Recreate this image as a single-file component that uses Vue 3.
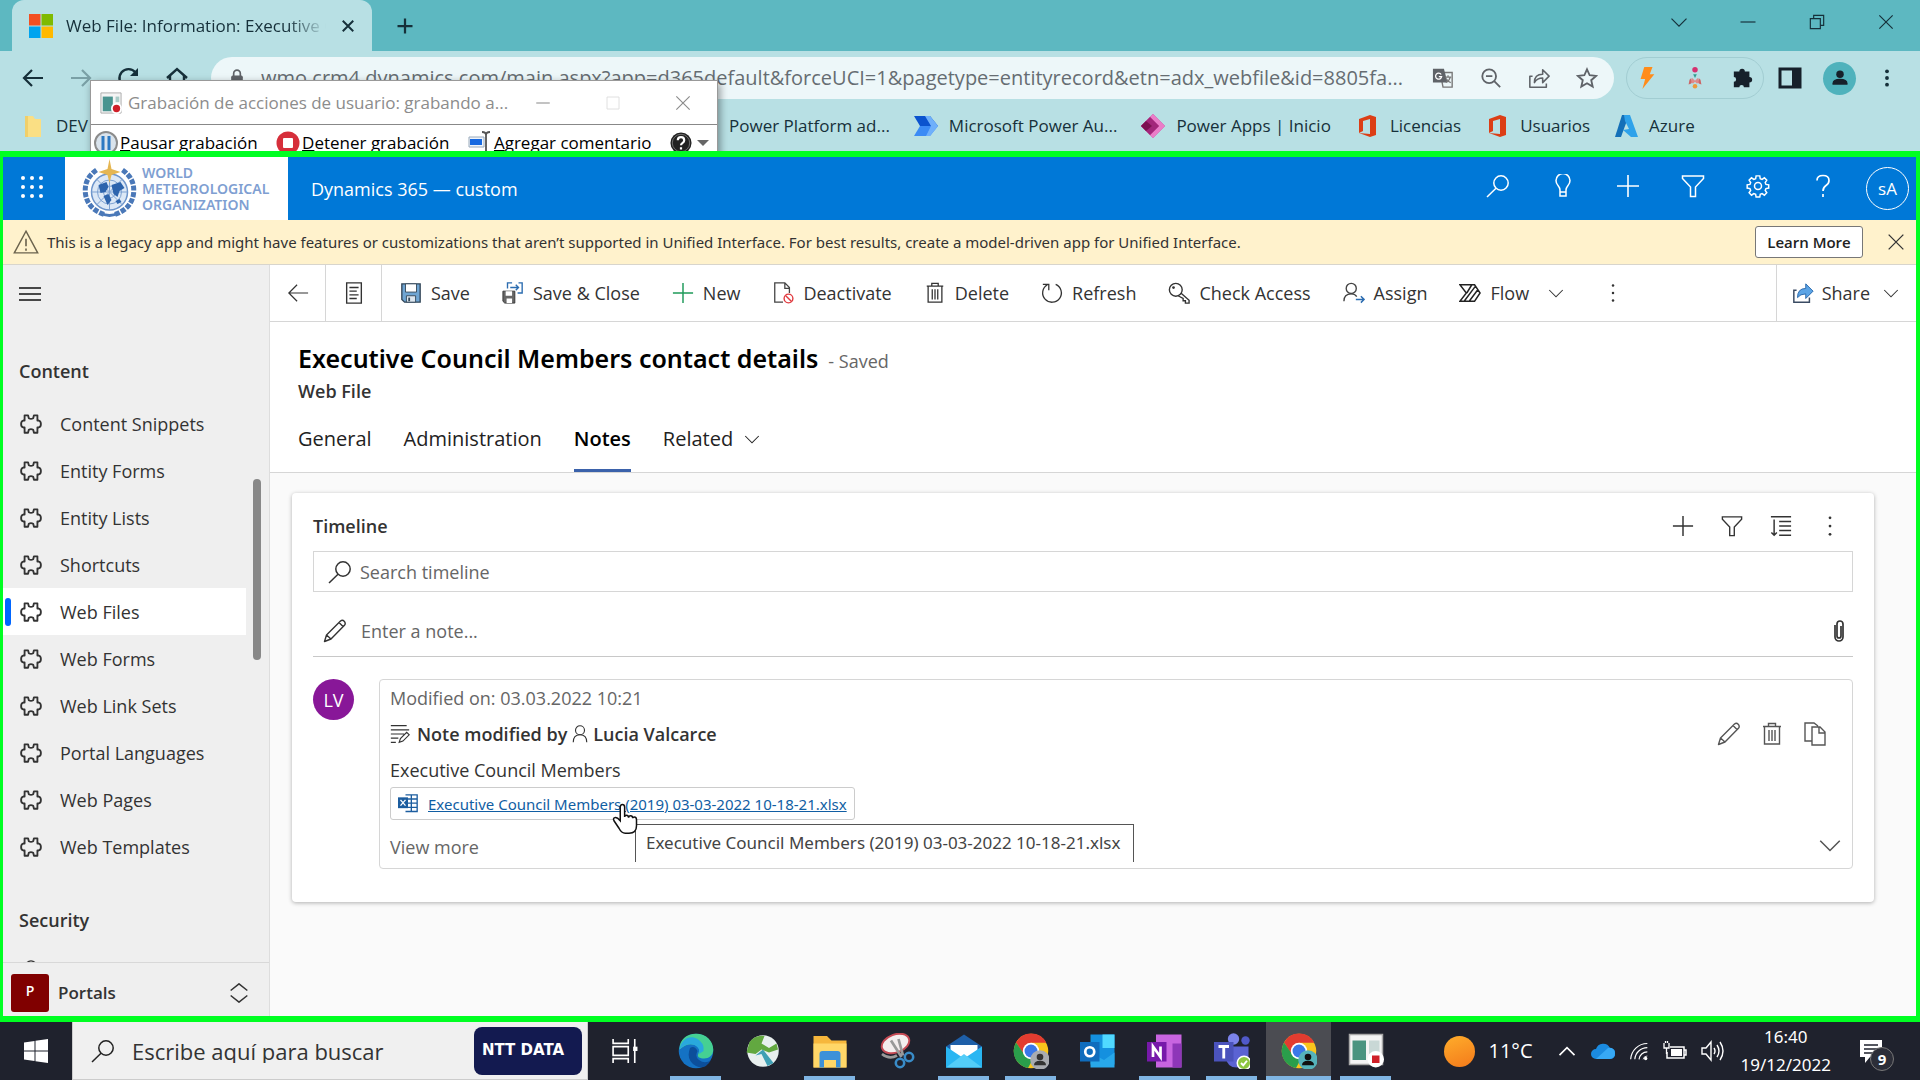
<script setup>
import { ref } from 'vue'

const I = {
  back: '<path d="M22 12H3M11 4l-8 8 8 8" fill="none" stroke="currentColor" stroke-width="2.2"/>',
  forward: '<path d="M2 12h19M13 4l8 8-8 8" fill="none" stroke="currentColor" stroke-width="2.2"/>',
  reload: '<path d="M20 15A9 9 0 1 1 18.500 6.500" fill="none" stroke="currentColor" stroke-width="2.400"/><path d="M21 2v8h-8z" fill="currentColor"/>',
  home: '<path d="M2 12L12 3l10 9M5 10v11h14V10" fill="none" stroke="currentColor" stroke-width="2.400"/>',
  lock: '<rect x="5" y="9" width="14" height="12" rx="2" fill="currentColor"/><path d="M8 10V6.500a4 4 0 0 1 8 0V10" fill="none" stroke="currentColor" stroke-width="2"/>',
  close: '<path d="M5 5l14 14M19 5L5 19" fill="none" stroke="currentColor" stroke-width="2.600"/>',
  thinClose: '<path d="M4 4l16 16M20 4L4 20" fill="none" stroke="currentColor" stroke-width="1.400"/>',
  boldPlus: '<path d="M12 2v20M2 12h20" fill="none" stroke="currentColor" stroke-width="3"/>',
  plus: '<path d="M12 1v22M1 12h22" fill="none" stroke="currentColor" stroke-width="1.600"/>',
  chevron: '<path d="M3 8l9 9 9-9" fill="none" stroke="currentColor" stroke-width="1.400"/>',
  caretUp: '<path d="M3 17l9-9 9 9" fill="none" stroke="currentColor" stroke-width="2"/>',
  minimize: '<path d="M3 12h18" fill="none" stroke="currentColor" stroke-width="1.400"/>',
  restore: '<path d="M4 8h12v12H4zM8 8V4h12v12h-4" fill="none" stroke="currentColor" stroke-width="1.400"/>',
  square: '<path d="M4 4h16v16H4z" fill="none" stroke="currentColor" stroke-width="1.200"/>',
  translate: '<path d="M9 6h13v16H12z" fill="none" stroke="#777" stroke-width="1.500"/><path d="M1 2h12l4 15H1z" fill="#5f6368"/><path d="M10 8.200a3.300 3.300 0 1 0 .5 2.300H7.500" fill="none" stroke="#fff" stroke-width="1.400"/><path d="M14 11h7M17.500 9v2M20 11q-1 4-5 6M15.500 13q2 3 5 4" fill="none" stroke="#777" stroke-width="1.300"/>',
  zoomOut: '<circle cx="10" cy="10" r="7.500" fill="none" stroke="currentColor" stroke-width="2"/><path d="M15.500 15.500L22 22M6.500 10h7" fill="none" stroke="currentColor" stroke-width="2"/>',
  shareUrl: '<path d="M5 10H2v12h18v-4M7 17q0-9 9-9V3l7 7-7 7v-5q-6 0-9 5z" fill="none" stroke="currentColor" stroke-width="1.700" stroke-linejoin="round"/>',
  star: '<path d="M12 2.500l2.900 6.500 7 .7-5.300 4.700 1.600 7L12 17.700l-6.200 3.700 1.600-7L2.100 9.700l7-.7z" fill="none" stroke="currentColor" stroke-width="2"/>',
  bolt: '<path d="M9 0h9l-3 8h5L7 24l3-11H5z" fill="#ff8c1a"/>',
  rocket: '<circle cx="12" cy="3" r="3" fill="#d6316f"/><path d="M10 8h4l-2 4z" fill="#2f9e8f"/><path d="M9 12l3 3 3-3 2 5-3 1-2-2-2 2-3-1z" fill="#e08a8a"/><path d="M6 14l2-2v6l-3 1zM18 14l-2-2v6l3 1z" fill="#c66"/><circle cx="12" cy="21" r="2.500" fill="#ec9a3c"/>',
  puzzle: '<path d="M8 5a3 3 0 0 1 6 0h5v6a3 3 0 0 1 0 6v5h-6a2.500 2.500 0 0 0-5 0H2v-6a2.500 2.500 0 0 0 0-5V5z" fill="#16202a"/>',
  panel: '<rect x="2" y="3" width="20" height="18" fill="none" stroke="#16202a" stroke-width="3"/><rect x="14" y="3" width="8" height="18" fill="#16202a"/>',
  person: '<circle cx="12" cy="7" r="5" fill="#16202a"/><path d="M2 21v-2q0-6 10-6t10 6v2z" fill="#16202a"/>',
  dots: '<g fill="currentColor"><circle cx="12" cy="4" r="2.300"/><circle cx="12" cy="12" r="2.300"/><circle cx="12" cy="20" r="2.300"/></g>',
  more: '<g fill="currentColor"><circle cx="12" cy="3" r="1.500"/><circle cx="12" cy="12" r="1.500"/><circle cx="12" cy="21" r="1.500"/></g>',
  ms: '<path d="M0 0h11.500v11.500H0z" fill="#f25022"/><path d="M12.500 0H24v11.500H12.500z" fill="#7fba00"/><path d="M0 12.500h11.500V24H0z" fill="#00a4ef"/><path d="M12.500 12.500H24V24H12.500z" fill="#ffb900"/>',
  folder: '<path d="M4 2h8l2 3h6v18H4z" fill="#fadf84"/><path d="M4 2h3v21H4z" fill="#f0cf6a"/>',
  automate: '<path d="M0 2h16l8 10H6z" fill="#0b53ce"/><path d="M6 12h18l-8 10H0z" fill="#3b8bf5"/><path d="M11 2h5l8 10-8 10h-4l5-10z" fill="#6fb0fb"/>',
  apps: '<path d="M12 0l12 12-12 12L0 12z" fill="#c4398f"/><path d="M12 0l12 12-12 12-3-3 9-9-9-9z" fill="#ea7dc8"/><path d="M9 3l9 9-9 9-9-9z" fill="#a3267a"/><path d="M5 7l6 5-6 5-5-5z" fill="#7c1252"/>',
  office: '<path d="M4 5L15 1l6 2v18l-6 2-11-4 11 1V5L8 7v10l-4 2z" fill="#dc3e15"/>',
  azure: '<path d="M8 1h7L7 23H1z" fill="#1470b8"/><path d="M10 1h6l8 22h-7L9 16l6-1-4-8z" fill="#2fa2ea"/>',
  recorder: '<path d="M1 1h22v22H1z" fill="#f4f4f4" stroke="#a8a8a8"/><path d="M3 5h11v16H3z" fill="#4a9490"/><path d="M17 5h4v6h-4z" fill="#a9cbc7"/><circle cx="18" cy="18" r="6" fill="#fff"/><circle cx="18" cy="18" r="4" fill="#cf1f28"/>',
  recorderTask: '<path d="M1 1h22v20H1z" fill="#f4f4f4" stroke="#a8a8a8"/><path d="M3 5h9v13H3z" fill="#4a9480"/><path d="M14 5h7v9h-7z" fill="#c9d8d6"/><circle cx="18.500" cy="17.500" r="5.500" fill="#fff"/><rect x="16" y="15" width="5" height="5" fill="#cf1f28"/>',
  pause: '<circle cx="12" cy="12" r="11" fill="#d9e3ec" stroke="#8c8c8c" stroke-width="2"/><path d="M7.500 5h3v14h-3zM13.500 5h3v14h-3z" fill="#2c79c2"/>',
  stop: '<circle cx="12" cy="12" r="11.500" fill="#d62f3b"/><rect x="7" y="7" width="10" height="10" rx="1" fill="#fff"/>',
  comment: '<path d="M1 6h15v10H1z" fill="#eef3fa" stroke="#9ab"/><path d="M2 8h12v6H2z" fill="#1769e0"/><path d="M14 1q4 0 4 3v15q0 3-4 3M22 1q-4 0-4 3M22 22q-4 0-4-3" fill="none" stroke="#555" stroke-width="1.800"/>',
  help: '<circle cx="12" cy="12" r="11.500" fill="#222"/><circle cx="12" cy="12" r="9.500" fill="none" stroke="#777"/><path d="M8.500 9q0-3.500 3.500-3.500T15.500 9q0 1.700-1.700 2.800T12 14.500M12 16.500v2.500" fill="none" stroke="#fff" stroke-width="2.400"/>',
  search: '<circle cx="15" cy="9" r="7.200" fill="none" stroke="currentColor" stroke-width="1.500"/><path d="M10 14.200L1 23" fill="none" stroke="currentColor" stroke-width="1.500"/>',
  bulb: '<path d="M9 18v-2q0-2-2-4.500a7 7 0 1 1 10 0Q15 14 15 16v2zM9 18v4h6v-4" fill="none" stroke="currentColor" stroke-width="1.500"/>',
  filter: '<path d="M1.500 2h21v2.500L14.500 13v9.500h-5V13l-8-8.500z" fill="none" stroke="currentColor" stroke-width="1.500"/>',
  gear: '<circle cx="12" cy="12" r="3.500" fill="none" stroke="currentColor" stroke-width="1.500"/><path d="M10 1.500h4l.5 3 2 .9 2.500-1.800 2.600 2.600-1.700 2.600.8 2 3 .5v3.400l-3 .6-.8 2 1.700 2.500-2.600 2.700-2.500-1.800-2 .8-.5 3h-4l-.5-3-2-.8L5 22.500l-2.600-2.700 1.700-2.500-.8-2-3-.6v-3.400l3-.5.8-2L2.400 6.200 5 3.600l2.500 1.800 2-.9z" fill="none" stroke="currentColor" stroke-width="1.600" transform="translate(.9 .5) scale(.92)"/>',
  question: '<path d="M6 6.500q0-5 6-5t6 5q0 3-3 5t-3 5.500M12 20v3" fill="none" stroke="currentColor" stroke-width="1.700"/>',
  warning: '<path d="M12 2l10.800 20H1.200z" fill="none" stroke="#6b634e" stroke-width="1.300"/><path d="M12 9v7M12 18v2" stroke="#6b634e" stroke-width="1.500"/>',
  burger: '<path d="M1 6h22M1 12h22M1 18h22" stroke="currentColor" stroke-width="1.500"/>',
  piece: '<path d="M5 2.500h3.800l.8 3.200q2.400 1.400 4.800 0l.8-3.200H19v5.700h1.500q2.300.6 2.300 3.800t-2.300 3.800H19v5.700h-3.800l-.8-3.200q-2.400-1.400-4.800 0l-.8 3.200H5v-5.700H3.500q-2.300-.6-2.300-3.800t2.300-3.800H5z" fill="none" stroke="currentColor" stroke-width="2" stroke-linejoin="round"/>',
  arrow: '<path d="M23 12H2M11 3l-9 9 9 9" fill="none" stroke="currentColor" stroke-width="1.300"/>',
  form: '<path d="M4 1h16v22H4zM7 6h10M7 10h8M7 14h10M7 18h8" fill="none" stroke="currentColor" stroke-width="1.500"/>',
  save: '<path d="M2 2h20v20H5l-3-3z" fill="#6fa5d3" stroke="#35485a" stroke-width="1.500"/><path d="M6 2h12v9H6z" fill="#fff" stroke="#35485a"/><path d="M7 15h10v7H7z" fill="#dce6ef" stroke="#35485a"/><path d="M9 17h2v4H9z" fill="#35485a"/>',
  saveClose: '<path d="M1 10h13v13H3l-2-2z" fill="#666" stroke="#333"/><path d="M4 10h7v5H4zM5 18h6v5H5z" fill="#fff"/><path d="M6 7V1h5M18 1h4v11h-5M9 6h9M15 3l3 3-3 3" fill="none" stroke="#2b6cb0" stroke-width="1.500"/>',
  deactivate: '<path d="M12 22H3V1h11l5 5v6M14 1v6h5" fill="none" stroke="#444" stroke-width="1.400"/><circle cx="18" cy="18" r="4.800" fill="#fff" stroke="#e0393e" stroke-width="1.500"/><path d="M14.700 14.700l6.600 6.600" stroke="#e0393e" stroke-width="1.500"/>',
  trash: '<path d="M3 4.500h18M8.500 4V1.500h7V4M4.500 4.500V22h15V4.500M9 8v11M12 8v11M15 8v11" fill="none" stroke="currentColor" stroke-width="1.400"/>',
  refresh: '<path d="M16 2.500A10.200 10.200 0 1 1 7 3M2 2.500h6.500V9" fill="none" stroke="currentColor" stroke-width="1.400"/>',
  key: '<circle cx="8.500" cy="8.500" r="7" fill="none" stroke="currentColor" stroke-width="1.500"/><circle cx="6" cy="6" r="1.500" fill="currentColor"/><path d="M14 12l9 8v3h-4v-2.500h-2.500V18L11 15" fill="none" stroke="currentColor" stroke-width="1.500"/>',
  assign: '<circle cx="9" cy="7" r="5.500" fill="none" stroke="#444" stroke-width="1.500"/><path d="M1 21q0-8 8-8 4 0 6 3" fill="none" stroke="#444" stroke-width="1.500"/><path d="M14 19h9M19.500 15.500L23 19l-3.500 3.500" fill="none" stroke="#2b6cb0" stroke-width="1.600"/>',
  flow: '<path d="M1 3h16l6 9-6 9H1l7-9zM8.500 12L14 3M6 20.500L18 4.500M11.500 20.500L20.500 8.500" fill="none" stroke="#222" stroke-width="1.600"/>',
  share: '<path d="M5 9H2v13h17v-5" fill="none" stroke="#3a4b63" stroke-width="1.600"/><path d="M6 17q0-10 9-10V2l8 8-8 8v-5q-6 0-9 4z" fill="#5ba4e6" stroke="#2464a8"/>',
  sort: '<path d="M1 2h22M10 7h13M10 12h13M10 17h13M10 22h13M4.500 5v17M1.500 19l3 3 3-3" fill="none" stroke="currentColor" stroke-width="1.600"/>',
  pencil: '<path d="M1.500 22.500l2-6.500L17.500 2q2-1.500 3.700.3T21.700 6L8 20zM3.500 16L8 20M16 3.500L20.500 8" fill="none" stroke="currentColor" stroke-width="1.400" stroke-linejoin="round"/>',
  copy: '<path d="M9 19H2V1h9l4 3M9 5h8l5 5v13H9zM16 5v6h6" fill="none" stroke="currentColor" stroke-width="1.400"/>',
  clip: '<path d="M8 6v12a4 4 0 0 0 8 0V5a3 3 0 0 0-6 0v12a1.800 1.800 0 0 0 4 0V7" fill="none" stroke="currentColor" stroke-width="1.700"/>',
  note: '<path d="M1 2h19M1 7h22M1 12h16M1 17h9M1 22h6M11 22l1.500-4.500L20 10l3 3-7.500 7.500z" fill="none" stroke="currentColor" stroke-width="1.400"/>',
  user: '<circle cx="12" cy="7" r="6" fill="none" stroke="currentColor" stroke-width="1.500"/><path d="M3 23q0-10 9-10t9 10" fill="none" stroke="currentColor" stroke-width="1.500"/>',
  excel: '<path d="M9 1h14v20H9M9 6h14M9 11h14M9 16h14M16 1v20" fill="none" stroke="#1c5d9f" stroke-width="1.600"/><path d="M0 4h12v13H0z" fill="#1c5d9f"/><path d="M3 7l6 7M9 7l-6 7" stroke="#fff" stroke-width="1.600"/>',
  updown: '<path d="M2 9l10-8 10 8M2 15l10 8 10-8" fill="none" stroke="currentColor" stroke-width="1.800"/>',
  windows: '<path d="M0 3.500l10.500-1.500v9.500H0zM11.500 1.800L24 0v11.500H11.500zM0 12.500h10.500V22L0 20.500zM11.500 12.500H24V24l-12.500-1.800z" fill="#fff"/>',
  taskview: '<path d="M1 1v4h14V1M1 23v-4h14v4M1 8h14v8H1zM21 1v22" fill="none" stroke="#fff" stroke-width="1.500"/><path d="M19.500 8h4v4h-4z" fill="#fff"/>',
  cloud: '<path d="M5 20a5 5 0 0 1 0-10 7.500 7.500 0 0 1 14-1 5.500 5.500 0 0 1 0 11z" fill="#1b8be0"/><path d="M5 20L17 9q6-1 7 5 0 5-5 6z" fill="#37a9f5"/>',
  wifi: '<path d="M2 22A20 20 0 0 1 22 3M7 22A15 15 0 0 1 22 8M12 22a10 10 0 0 1 10-9" fill="none" stroke="#fff" stroke-width="1.400"/><path d="M17 22a5 5 0 0 1 5-4" fill="none" stroke="#fff"/><circle cx="20" cy="21" r="2" fill="#fff"/>',
  battery: '<path d="M7 8h14v11H4v-6M21 11h2v5h-2" fill="none" stroke="#fff" stroke-width="1.500"/><path d="M8 10h11v7H8z" fill="#fff"/><path d="M1 4v5h5V4M2.500 2v2M4.500 2v2M3.500 9v6" fill="none" stroke="#fff" stroke-width="1.300"/>',
  sound: '<path d="M1 9h4l5-6v18l-5-6H1zM13 9q2 3 0 6M16 6q4 6 0 12M19 3q6 9 0 18" fill="none" stroke="#fff" stroke-width="1.400"/>',
  chat: '<path d="M1 1h22v17H11l-5 6v-6H1z" fill="#fff"/><path d="M5 6h14M5 10h14M5 14h9" stroke="#1e212c" stroke-width="1.500"/>',
  hand: '<path d="M9 14V3q0-2 1.700-2T12.500 3v8q0-1.500 1.500-1.500t1.700 2q0-1.500 1.600-1.500t1.700 2q0-1 1.400-1t1.600 2v5q0 6-6 6h-3q-3 0-5-4l-4-6q-1-2 .7-2.500T9 14z" fill="#fff" stroke="#111" stroke-width="1.200"/>',
  edge: '<circle cx="12" cy="12" r="11.500" fill="#1472c4"/><path d="M1 11C1 4 6 .5 12 .5c7 0 11.500 5 11.500 10.500 0 4-3 6-6 6s-5-1-4-3q2-4-2-6-5-2-10.500 3z" fill="#45d093"/><path d="M1 11C2 4 8 1 13 4q5 3 4 8l-3 2q1-4-3-6-5-2-10 3z" fill="#29a9dd"/><path d="M8 10q-3 8 4 12 6 3 10-4-4 3-8 0-3-2-1-6-2-4-5-2z" fill="#0c4f9b"/>',
  globe: '<circle cx="12" cy="12" r="10.500" fill="#e8f0ef"/><path d="M3 6q4-5 10-4l-2 5 5 3 5-3 1 4-6 2-5-2-4 3-6-1z" fill="#62a840"/><path d="M12 11l7 9-4 2-4-8-4 1z" fill="#3fa0b5"/>',
  explorer: '<path d="M1 2h9l3 3h10v18H1z" fill="#f6b73c"/><path d="M1 7h22v16H1z" fill="#ffd768"/><path d="M5 23v-9q0-2 2-2h10q2 0 2 2v9h-3v-5H8v5z" fill="#3d91d8"/>',
  snip: '<ellipse cx="11" cy="7" rx="9.500" ry="6" fill="#f3eeee" stroke="#c54a54" stroke-width="1.300" transform="rotate(-20 11 7)"/><path d="M2 14q5 4 10 1M13 4l3 11M8 5l7 11" fill="none" stroke="#999" stroke-width="1.800"/><circle cx="14" cy="20" r="2.800" fill="none" stroke="#398cc8" stroke-width="1.700"/><circle cx="20" cy="16" r="2.800" fill="none" stroke="#398cc8" stroke-width="1.700"/>',
  mail: '<path d="M0 9l12-8 12 8v14H0z" fill="#1e5fa8"/><path d="M3 8h18v10H3z" fill="#fff"/><path d="M0 9l12 8 12-8v14H0z" fill="#29b6f2"/><path d="M0 23l12-9 12 9z" fill="#53cdf8"/>',
  chrome: '<circle cx="12" cy="12" r="11.500" fill="#f9c51c"/><path d="M2 6.300A11.500 11.500 0 0 1 22.200 6.500H12L7 14z" fill="#e23c30"/><path d="M2 6.300L8 15l6 1-4 7.400A11.500 11.500 0 0 1 2 6.300z" fill="#2a9e4b"/><circle cx="12" cy="12" r="5.500" fill="#fff"/><circle cx="12" cy="12" r="4.300" fill="#3a78e7"/>',
  outlook: '<path d="M7 1h16v20H7z" fill="#1490df"/><path d="M15 1h8v9h-8z" fill="#50d9ff"/><path d="M7 13l9 5 7-5v10H7z" fill="#28a8ea"/><path d="M0 6h13v13H0z" fill="#0f6cbd"/><circle cx="6.500" cy="12.500" r="3" fill="none" stroke="#fff" stroke-width="1.800"/>',
  onenote: '<path d="M6 1h17v22H6z" fill="#c864e0"/><path d="M17 7h6v16h-6z" fill="#8e36b8"/><path d="M0 6h13v13H0z" fill="#7719aa"/><path d="M4 16V9l5 7V9" fill="none" stroke="#fff" stroke-width="1.800"/>',
  teams: '<circle cx="13" cy="4" r="3.800" fill="#7b83eb"/><circle cx="21" cy="5" r="2.800" fill="#5059c9"/><path d="M8 9h15v8q-2 6-8 6t-7-6z" fill="#5b63d3"/><path d="M0 6h13v13H0z" fill="#4b53bc"/><path d="M3 9h7M6.500 9v8" stroke="#fff" stroke-width="1.900"/><circle cx="20" cy="20" r="4.500" fill="#8cc63f" stroke="#fff"/><path d="M18 20l1.500 1.500L22 18.500" fill="none" stroke="#fff" stroke-width="1.300"/>'
}
I.chromeGray = I.chrome + '<circle cx="18" cy="18" r="6.500" fill="#a8abb0"/><circle cx="18" cy="16" r="2.200" fill="#333"/><path d="M14 21.500q0-3 4-3t4 3z" fill="#333"/>'
I.chromeTeal = I.chrome + '<circle cx="18" cy="18" r="6.500" fill="#55b3bb"/><circle cx="18" cy="16" r="2.200" fill="#111"/><path d="M14 21.500q0-3 4-3t4 3z" fill="#111"/>'

const url = ref('wmo.crm4.dynamics.com/main.aspx?app=d365default&forceUCI=1&pagetype=entityrecord&etn=adx_webfile&id=8805fa...')
const timelineSearch = ref('')
const noteText = ref('')
const desktopSearch = ref('')

const bookmarks = [
  { t: 'Power Platform ad...' },
  { i: 'automate', t: 'Microsoft Power Au...' },
  { i: 'apps', t: 'Power Apps | Inicio' },
  { i: 'office', t: 'Licencias' },
  { i: 'office', t: 'Usuarios' },
  { i: 'azure', t: 'Azure' }
]
const nav = ['Content Snippets', 'Entity Forms', 'Entity Lists', 'Shortcuts', 'Web Files', 'Web Forms', 'Web Link Sets', 'Portal Languages', 'Web Pages', 'Web Templates']
const commands = [
  { i: 'save', t: 'Save' },
  { i: 'saveClose', t: 'Save & Close' },
  { i: 'plus', t: 'New', c: 'green' },
  { i: 'deactivate', t: 'Deactivate' },
  { i: 'trash', t: 'Delete' },
  { i: 'refresh', t: 'Refresh' },
  { i: 'key', t: 'Check Access' },
  { i: 'assign', t: 'Assign' },
  { i: 'flow', t: 'Flow' }
]
const headerIcons = ['search', 'bulb', 'plus', 'filter', 'gear', 'question']
const tasks = [
  { i: 'edge', open: true }, { i: 'globe' }, { i: 'explorer', open: true }, { i: 'snip' },
  { i: 'mail', open: true }, { i: 'chromeGray', open: true }, { i: 'outlook' },
  { i: 'onenote', open: true }, { i: 'teams', open: true },
  { i: 'chromeTeal', open: true, active: true }, { i: 'recorderTask', open: true }
]
const fileName = 'Executive Council Members (2019) 03-03-2022 10-18-21.xlsx'
</script>

<template>
  <div class="screen">
    <header class="browser">
      <div class="tabstrip">
        <div class="tab">
          <svg class="s24" viewBox="0 0 24 24" v-html="I.ms" />
          <span class="tab-title">Web File: Information: Executive C</span>
          <button class="plain" aria-label="Close tab"><svg class="s18" viewBox="0 0 24 24" v-html="I.close" /></button>
        </div>
        <button class="plain newtab" aria-label="New tab"><svg class="s18" viewBox="0 0 24 24" v-html="I.boldPlus" /></button>
        <div class="winctl">
          <button v-for="k in ['chevron', 'minimize', 'restore', 'thinClose']" :key="k" class="plain" :aria-label="k">
            <svg class="s20" viewBox="0 0 24 24" v-html="I[k]" />
          </button>
        </div>
      </div>
      <div class="toolbar">
        <div class="navbtns">
          <button v-for="k in ['back', 'forward', 'reload', 'home']" :key="k" class="plain" :class="k" :aria-label="k">
            <svg class="s24" viewBox="0 0 24 24" v-html="I[k]" />
          </button>
        </div>
        <div class="omnibox">
          <svg class="s20" viewBox="0 0 24 24" v-html="I.lock" />
          <input v-model="url" class="url" type="text" aria-label="Address" />
          <button v-for="k in ['translate', 'zoomOut', 'shareUrl', 'star']" :key="k" class="plain" :aria-label="k">
            <svg class="s22" viewBox="0 0 24 24" v-html="I[k]" />
          </button>
        </div>
        <div class="extensions">
          <button v-for="k in ['bolt', 'rocket', 'puzzle']" :key="k" class="plain" :aria-label="k">
            <svg class="s22" viewBox="0 0 24 24" v-html="I[k]" />
          </button>
        </div>
        <button class="plain" aria-label="Side panel"><svg class="s24" viewBox="0 0 24 24" v-html="I.panel" /></button>
        <button class="plain profile" aria-label="Profile"><svg class="s18" viewBox="0 0 24 24" v-html="I.person" /></button>
        <button class="plain" aria-label="Menu"><svg class="s20" viewBox="0 0 24 24" v-html="I.dots" /></button>
      </div>
      <nav class="bookmarks" aria-label="Bookmarks">
        <a href="#" class="folder"><svg class="s24" viewBox="0 0 24 24" v-html="I.folder" />DEV</a>
        <a v-for="b in bookmarks" :key="b.t" href="#"><svg v-if="b.i" class="s24" viewBox="0 0 24 24" v-html="I[b.i]" />{{ b.t }}</a>
      </nav>

      <section class="recorder" aria-label="Grabación de acciones">
        <div class="rec-title">
          <svg class="s22" viewBox="0 0 24 24" v-html="I.recorder" />
          <span>Grabación de acciones de usuario: grabando a...</span>
          <button class="plain" aria-label="Minimizar"><svg class="s18" viewBox="0 0 24 24" v-html="I.minimize" /></button>
          <button class="plain faint" aria-label="Maximizar"><svg class="s18" viewBox="0 0 24 24" v-html="I.square" /></button>
          <button class="plain" aria-label="Cerrar"><svg class="s20" viewBox="0 0 24 24" v-html="I.thinClose" /></button>
        </div>
        <div class="rec-tools">
          <button class="plain"><svg class="s24" viewBox="0 0 24 24" v-html="I.pause" /><span><u>P</u>ausar grabación</span></button>
          <button class="plain"><svg class="s24" viewBox="0 0 24 24" v-html="I.stop" /><span><u>D</u>etener grabación</span></button>
          <button class="plain"><svg class="s24" viewBox="0 0 24 24" v-html="I.comment" /><span><u>A</u>gregar comentario</span></button>
          <button class="plain" aria-label="Ayuda"><svg class="s22" viewBox="0 0 24 24" v-html="I.help" /><i class="caret" /></button>
        </div>
      </section>
    </header>

    <div class="app">
      <div class="appbar">
        <button class="plain waffle" aria-label="App launcher"><i v-for="n in 9" :key="n" /></button>
        <div class="logo">
          <svg class="emblem" viewBox="0 0 56 60">
            <g fill="none" stroke="#4a78b8" stroke-width="5" stroke-dasharray="5 1.500">
              <path d="M15 11Q2 20 4 35t20 21" /><path d="M41 11q13 9 11 24T32 56" />
            </g>
            <circle cx="28" cy="33" r="18" fill="#dce8f6" stroke="#6d95cb" stroke-width="1.500" />
            <g fill="none" stroke="#7fa3d3"><circle cx="28" cy="33" r="12" /><circle cx="28" cy="33" r="6" /><path d="M10 33h36M28 15v36M15 20l26 26M41 20L15 46" /></g>
            <path d="M17 26l8-3 2 5-3 5-5 1zM30 26l9-3 4 6-5 3-2 6-4-3zM22 37l5-2 3 6-4 5zM34 42l4-2 2 3-4 2z" fill="#2d64ad" />
            <path d="M28 0l2 10 9 3-9 3-2 8-2-8-9-3 9-3z" fill="#e5b652" />
            <path d="M19 54q9 5 18 0" fill="none" stroke="#4a78b8" stroke-width="3" />
          </svg>
          <span class="wmo">WORLD<br />METEOROLOGICAL<br />ORGANIZATION</span>
        </div>
        <span class="appname">Dynamics 365 — custom</span>
        <div class="header-icons">
          <button v-for="k in headerIcons" :key="k" class="plain glyph" :aria-label="k"><svg class="s24" viewBox="0 0 24 24" v-html="I[k]" /></button>
          <button class="plain me">sA</button>
        </div>
      </div>

      <div class="notice" role="alert">
        <svg class="s26" viewBox="0 0 24 24" v-html="I.warning" />
        <span>This is a legacy app and might have features or customizations that aren’t supported in Unified Interface. For best results, create a model-driven app for Unified Interface.</span>
        <button class="learn">Learn More</button>
        <button class="plain" aria-label="Dismiss"><svg class="s22" viewBox="0 0 24 24" v-html="I.thinClose" /></button>
      </div>

      <div class="body">
        <aside class="sidebar">
          <div class="side-scroll">
            <button class="plain burger" aria-label="Collapse"><svg class="s24" viewBox="0 0 24 24" v-html="I.burger" /></button>
            <h3 class="content-title">Content</h3>
            <nav>
              <a v-for="n in nav" :key="n" href="#" :class="{ on: n === 'Web Files' }"><svg class="s22" viewBox="0 0 24 24" v-html="I.piece" />{{ n }}</a>
            </nav>
            <h3 class="security-title">Security</h3>
            <svg class="s22 peek" viewBox="0 0 24 24" v-html="I.user" />
            <i class="thumb" />
          </div>
          <button class="plain area">
            <span class="area-badge">P</span>
            <span class="area-name">Portals</span>
            <svg class="s20" viewBox="0 0 24 24" v-html="I.updown" />
          </button>
        </aside>

        <main class="main">
          <div class="commands">
            <button class="plain cell" aria-label="Back"><svg class="s22" viewBox="0 0 24 24" v-html="I.arrow" /></button>
            <button class="plain cell" aria-label="Form"><svg class="s22" viewBox="0 0 24 24" v-html="I.form" /></button>
            <div class="cmdlist">
              <button v-for="c in commands" :key="c.t" class="plain cmd"><svg class="s22" :class="c.c" viewBox="0 0 24 24" v-html="I[c.i]" />{{ c.t }}</button>
              <button class="plain" aria-label="Flow options"><svg class="s18" viewBox="0 0 24 24" v-html="I.chevron" /></button>
              <button class="plain overflow" aria-label="More commands"><svg class="s20" viewBox="0 0 24 24" v-html="I.more" /></button>
            </div>
            <button class="plain sharebtn"><svg class="s22" viewBox="0 0 24 24" v-html="I.share" />Share<svg class="s18 push" viewBox="0 0 24 24" v-html="I.chevron" /></button>
          </div>

          <div class="record">
            <div class="headline"><h1>Executive Council Members contact details</h1><span>- Saved</span></div>
            <h2>Web File</h2>
            <nav class="tabs">
              <a href="#">General</a>
              <a href="#">Administration</a>
              <a href="#" class="current">Notes</a>
              <a href="#">Related<svg class="s18" viewBox="0 0 24 24" v-html="I.chevron" /></a>
            </nav>
          </div>

          <div class="canvas">
            <section class="card">
              <div class="card-head">
                <h3>Timeline</h3>
                <button v-for="k in ['plus', 'filter', 'sort', 'more']" :key="k" class="plain" :aria-label="k"><svg class="s22" viewBox="0 0 24 24" v-html="I[k]" /></button>
              </div>
              <label class="find">
                <svg class="s24" viewBox="0 0 24 24" v-html="I.search" />
                <input v-model="timelineSearch" type="text" placeholder="Search timeline" aria-label="Search timeline" />
              </label>
              <label class="note-entry">
                <svg class="s24" viewBox="0 0 24 24" v-html="I.pencil" />
                <input v-model="noteText" type="text" placeholder="Enter a note..." aria-label="Enter a note" />
                <svg class="s24" viewBox="0 0 24 24" v-html="I.clip" />
              </label>
              <div class="entry">
                <span class="avatar">LV</span>
                <article>
                  <p class="muted">Modified on: 03.03.2022 10:21</p>
                  <p class="by"><svg class="s20" viewBox="0 0 24 24" v-html="I.note" /><b>Note modified by</b><svg class="s18" viewBox="0 0 24 24" v-html="I.user" /><b>Lucia Valcarce</b></p>
                  <p>Executive Council Members</p>
                  <div class="file">
                    <svg class="s20" viewBox="0 0 24 24" v-html="I.excel" /><a href="#">{{ fileName }}</a>
                    <svg class="hand" viewBox="0 0 24 26" v-html="I.hand" />
                    <span class="tip" role="tooltip">{{ fileName }}</span>
                  </div>
                  <p class="muted view">View more</p>
                  <div class="entry-tools">
                    <button v-for="k in ['pencil', 'trash', 'copy']" :key="k" class="plain" :aria-label="k"><svg class="s24" viewBox="0 0 24 24" v-html="I[k]" /></button>
                  </div>
                  <button class="plain expand" aria-label="Expand"><svg class="s26" viewBox="0 0 24 24" v-html="I.chevron" /></button>
                </article>
              </div>
            </section>
          </div>
        </main>
      </div>
    </div>

    <footer class="taskbar">
      <button class="plain start" aria-label="Inicio"><svg class="s24" viewBox="0 0 24 24" v-html="I.windows" /></button>
      <label class="desk-search">
        <svg class="s24" viewBox="0 0 24 24" v-html="I.search" />
        <input v-model="desktopSearch" type="text" placeholder="Escribe aquí para buscar" aria-label="Buscar" />
        <span class="ntt">NTT DATA</span>
      </label>
      <button class="plain taskview" aria-label="Vista de tareas"><svg class="s26" viewBox="0 0 24 24" v-html="I.taskview" /></button>
      <div class="tasks">
        <button v-for="t in tasks" :key="t.i" class="plain" :class="{ open: t.open, active: t.active }" :aria-label="t.i"><svg class="s36" viewBox="0 0 24 24" v-html="I[t.i]" /></button>
      </div>
      <div class="tray">
        <i class="sun" /><span class="temp">11°C</span>
        <svg class="s20" viewBox="0 0 24 24" v-html="I.caretUp" />
        <svg class="s24" viewBox="0 0 24 24" v-html="I.cloud" />
        <svg class="s20" viewBox="0 0 24 24" v-html="I.wifi" />
        <svg class="s24" viewBox="0 0 24 24" v-html="I.battery" />
        <svg class="s24" viewBox="0 0 24 24" v-html="I.sound" />
        <time class="clock">16:40<br />19/12/2022</time>
        <span class="alerts"><svg class="s24" viewBox="0 0 24 24" v-html="I.chat" /><b>9</b></span>
      </div>
    </footer>
  </div>
</template>

<style>
body { margin: 0; }
</style>

<style scoped>
* { box-sizing: border-box; }
.screen { display: flex; flex-direction: column; height: 100vh; overflow: hidden; font-family: "Open Sans", "Noto Sans", sans-serif; font-size: 18px; line-height: 24px; color: #333; background: #fafafa; }
svg { display: block; flex: none; }
h1, h2, h3, p { margin: 0; }
a { color: inherit; text-decoration: none; }
input { font: inherit; color: inherit; border: 0; background: none; outline: none; padding: 0; min-width: 0; }
input::placeholder { color: #666; opacity: 1; }
.plain { font: inherit; color: inherit; background: none; border: 0; padding: 0; display: flex; align-items: center; justify-content: center; flex: none; white-space: nowrap; }
.s18 { width: 18px; height: 18px; }
.s20 { width: 20px; height: 20px; }
.s22 { width: 22px; height: 22px; }
.s24 { width: 24px; height: 24px; }
.s26 { width: 26px; height: 26px; }
.s36 { width: 36px; height: 36px; }

.browser { position: relative; flex: none; background: #b8e0e4; color: #16303a; }
.tabstrip { display: flex; align-items: center; height: 51px; background: #5db8c1; }
.tab { display: flex; align-items: center; gap: 13px; width: 360px; height: 51px; margin-left: 12px; padding: 0 15px 0 17px; border-radius: 12px 12px 0 0; background: #b8e0e4; }
.tab-title { flex: 1; overflow: hidden; white-space: nowrap; font-size: 17px; mask-image: linear-gradient(90deg, #000 85%, transparent); }
.newtab { margin-left: 24px; }
.winctl { display: flex; gap: 49px; margin-left: auto; padding: 0 24px 8px 0; }
.toolbar { display: flex; align-items: center; height: 54px; padding-right: 23px; }
.navbtns { display: flex; gap: 24px; width: 211px; padding-left: 21px; }
.forward { color: #7aa0a6; }
.omnibox { display: flex; flex: 1; align-items: center; gap: 26px; height: 42px; padding: 0 16px; border-radius: 21px; background: #edf7f9; color: #5f6368; }
.omnibox .url { flex: 1; font-size: 20px; margin-left: -12px; color: #666d72; }
.extensions { display: flex; align-items: center; gap: 26px; height: 42px; margin: 0 14px 0 12px; padding: 0 9px; border: 1px solid #a2cdd2; border-radius: 21px; }
.profile { width: 33px; height: 33px; border-radius: 50%; background: #4fb2bc; margin: 0 21px; }
.bookmarks { display: flex; align-items: center; height: 46px; gap: 24px; padding: 0 0 4px 21px; font-size: 17px; white-space: nowrap; }
.bookmarks a { display: flex; align-items: center; gap: 11px; }
.bookmarks .folder { width: 684px; }

.recorder { position: absolute; left: 90px; top: 80px; width: 628px; height: 77px; background: #fff; border: 1px solid #999; box-shadow: 2px 3px 8px rgba(0, 0, 0, .4); z-index: 1; color: #000; }
.rec-title { display: flex; align-items: center; height: 44px; padding: 0 22px 0 9px; border-bottom: 1px solid #888; color: #8c8c8c; }
.rec-title span { flex: 1; margin-left: 6px; font-size: 17px; white-space: nowrap; }
.rec-title .plain { width: 24px; margin-left: 46px; }
.rec-title .plain:nth-of-type(1) { margin-left: 0; }
.faint { color: #ddd; }
.rec-tools { display: flex; align-items: center; justify-content: space-between; height: 36px; padding: 0 8px 0 3px; font-size: 17px; }
.rec-tools .plain { gap: 2px; }
.caret { margin-left: 3px; border: 6px solid transparent; border-top-color: #666; border-bottom: 0; }

.app { position: relative; z-index: 2; display: flex; flex-direction: column; flex: 1; min-height: 0; border: 6px solid #00ff22; border-left-width: 3px; border-right-width: 4px; }
.appbar { display: flex; align-items: center; flex: none; height: 63px; background: #0078d7; color: #fff; }
.waffle { display: grid; grid-template-columns: repeat(3, 4px); gap: 5px; width: 62px; padding: 0 4px 4px 0; }
.waffle i { width: 4px; height: 4px; border-radius: 50%; background: #fff; }
.logo { display: flex; align-items: center; gap: 4px; width: 223px; height: 63px; padding-left: 16px; background: #fff; }
.emblem { width: 57px; height: 60px; }
.wmo { font-family: "Noto Sans", sans-serif; font-size: 14px; line-height: 16px; font-weight: 600; color: #7f9fd2; }
.appname { margin-left: 23px; }
.header-icons { display: flex; align-items: center; gap: 41px; margin-left: auto; padding-right: 7px; }
.glyph { padding-bottom: 6px; }
.me { width: 43px; height: 43px; margin-left: -10px; border: 1px solid #fff; border-radius: 50%; font-size: 17px; }
.notice { display: flex; align-items: center; flex: none; height: 45px; padding: 0 9px 0 10px; background: #fff2cc; border-bottom: 1px solid #d8d5cc; font-family: "Noto Sans", sans-serif; font-size: 15px; white-space: nowrap; }
.notice span { flex: 1; margin-left: 8px; }
.learn { width: 108px; height: 32px; margin-right: 22px; padding: 0; border: 1px solid #777; border-radius: 3px; background: #fff; color: #222; font: 600 15px/24px "Open Sans", sans-serif; }

.body { display: flex; flex: 1; min-height: 0; }
.sidebar { display: flex; flex-direction: column; flex: none; width: 267px; background: #efefef; border-right: 1px solid #ddd; }
.side-scroll { position: relative; flex: 1; min-height: 0; overflow: hidden; }
.burger { margin: 17px 0 0 15px; color: #111; }
.sidebar h3 { padding-left: 16px; font-size: 18px; font-weight: 600; line-height: 24px; }
.content-title { margin-top: 53px; }
.sidebar nav { margin-top: 17px; }
.sidebar nav a { position: relative; display: flex; align-items: center; gap: 18px; height: 47px; margin-right: 23px; padding-left: 17px; }
.sidebar nav .on { background: #fff; }
.sidebar nav .on::before { content: ""; position: absolute; left: 2px; top: 10px; width: 6px; height: 28px; border-radius: 3px; background: #0066ff; }
.security-title { margin-top: 38px; }
.peek { margin: 28px 0 0 17px; }
.thumb { position: absolute; right: 8px; top: 214px; width: 8px; height: 181px; border-radius: 4px; background: #888; }
.area { justify-content: flex-start; height: 54px; padding: 6px 20px 0 8px; border-top: 1px solid #d8d8d8; font-weight: 600; font-size: 17px; }
.area-badge { width: 38px; height: 38px; border-radius: 3px; background: #800000; color: #fff; font-size: 14px; line-height: 34px; }
.area-name { flex: 1; margin-left: 9px; text-align: left; }

.main { display: flex; flex-direction: column; flex: 1; min-width: 0; background: #fff; }
.commands { display: flex; flex: none; height: 57px; border-bottom: 1px solid #d6d6d6; }
.cell { width: 56px; border-right: 1px solid #d6d6d6; }
.cmdlist { display: flex; flex: 1; align-items: center; gap: 32px; padding-left: 18px; }
.cmd { gap: 9px; }
.cmdlist .cmd + .plain:not(.cmd) { margin-left: -14px; }
.green { color: #1f9a5a; }
.overflow { margin-left: 6px; }
.sharebtn { gap: 8px; padding: 0 16px 0 15px; border-left: 1px solid #d6d6d6; }
.push { margin-left: 4px; }
.record { flex: none; height: 151px; padding: 19px 28px 0; border-bottom: 1px solid #d6d6d6; color: #222; }
.headline { display: flex; align-items: baseline; gap: 10px; line-height: 34px; }
h1 { font-family: "Noto Sans", sans-serif; font-size: 25px; font-weight: 600; color: #000; }
.headline span { font-size: 18px; color: #666; }
h2 { font-size: 18px; line-height: 26px; font-weight: 600; color: #333; }
.tabs { display: flex; gap: 32px; margin-top: 15px; font-size: 20px; }
.tabs a { display: flex; align-items: center; gap: 10px; height: 53px; padding-bottom: 13px; }
.tabs .current { font-weight: 600; color: #000; border-bottom: 3px solid #3b62ab; padding-bottom: 10px; }
.canvas { flex: 1; min-height: 0; padding: 20px 42px 0 22px; background: #fafafa; }
.card { padding: 12px 21px 33px; border-radius: 4px; background: #fff; box-shadow: 0 1px 4px rgba(0, 0, 0, .3); }
.card-head { display: flex; align-items: center; gap: 27px; height: 42px; padding-right: 12px; }
.card-head h3 { flex: 1; font-size: 18px; font-weight: 600; }
.find { display: flex; align-items: center; gap: 8px; height: 41px; margin-top: 4px; padding: 0 14px; border: 1px solid #d6d6d6; }
.find input, .note-entry input { flex: 1; }
.note-entry { display: flex; align-items: center; gap: 14px; height: 65px; padding: 13px 2px 0 10px; border-bottom: 1px solid #c8c8c8; }
.entry { display: flex; align-items: flex-start; gap: 25px; margin-top: 22px; }
.avatar { flex: none; width: 41px; height: 41px; border-radius: 50%; background: #881798; color: #fff; text-align: center; line-height: 42px; }
article { position: relative; flex: 1; height: 190px; padding: 3px 10px; border: 1px solid #d6d6d6; border-radius: 4px; }
article p { line-height: 30px; }
.muted { color: #666; }
.by { display: flex; align-items: center; gap: 7px; height: 42px; }
.by b { font-weight: 600; }
.by b + svg { margin: 0 -3px; }
.file { position: relative; display: flex; align-items: center; gap: 10px; width: max-content; height: 33px; margin-top: 2px; padding: 0 7px; border: 1px solid #ccc; border-radius: 3px; font-family: "Noto Sans", sans-serif; font-size: 15px; color: #115ea3; }
.file a { text-decoration: underline; }
article .view { margin-top: 12px; }
.hand { position: absolute; left: 218px; top: 15px; width: 30px; height: 33px; z-index: 2; }
.tip { position: absolute; left: 244px; top: 36px; height: 38px; padding: 0 12px 0 10px; border: 1px solid #555; border-bottom: 0; background: #fff; color: #444; font-size: 17px; line-height: 36px; white-space: nowrap; z-index: 1; }
.entry-tools { position: absolute; right: 25px; top: 42px; display: flex; gap: 19px; color: #555; }
.expand { position: absolute; right: 9px; bottom: 10px; color: #555; }

.taskbar { display: flex; align-items: stretch; flex: none; height: 58px; background: #1f222d; color: #fff; }
.start { width: 72px; }
.desk-search { display: flex; align-items: center; flex: none; width: 516px; padding: 0 5px 0 18px; background: #f0f0f0; border: 1px solid #ccc; border-top: 0; color: #222; }
.desk-search input { flex: 1; margin-left: 17px; font-size: 22px; }
.desk-search input::placeholder { color: #333; }
.ntt { width: 108px; height: 48px; padding-right: 10px; border-radius: 8px; background: #131a50; color: #fff; font: 700 15px/46px "DejaVu Sans", sans-serif; text-align: center; }
.taskview { width: 74px; }
.tasks { display: flex; }
.tasks .plain { width: 51px; margin: 0 8px; }
.tasks .open { border-bottom: 4px solid #7fb5e3; padding-top: 4px; }
.tasks .active { width: 65px; margin: 0 1px; background: #4b4c52; }
.tray { display: flex; align-items: center; gap: 14px; margin-left: auto; padding-right: 25px; }
.sun { width: 31px; height: 31px; border-radius: 50%; background: linear-gradient(160deg, #ffad2b, #f37a1b); }
.temp { font-size: 20px; margin-right: 10px; }
.clock { margin-left: 2px; text-align: center; font-family: "Noto Sans", sans-serif; font-size: 17px; line-height: 28px; }
.alerts { position: relative; margin-left: 14px; width: 36px; }
.alerts b { position: absolute; left: 11px; top: 8px; width: 24px; height: 24px; border: 1px solid #777; border-radius: 50%; background: #2c2e38; font-size: 15px; line-height: 22px; text-align: center; }
</style>
